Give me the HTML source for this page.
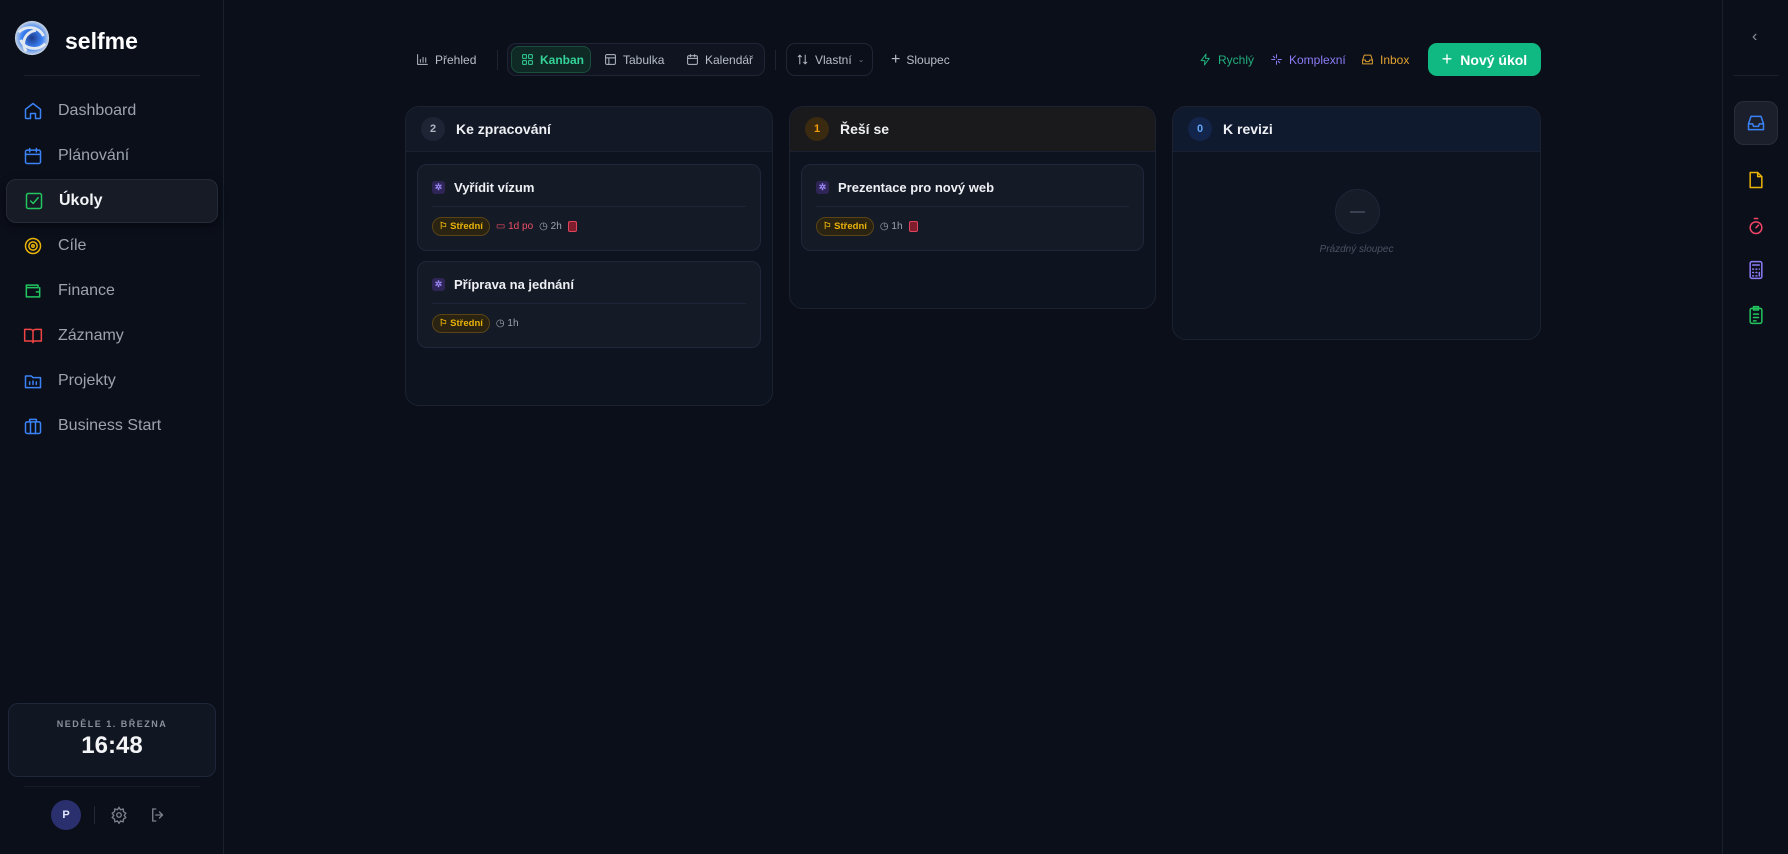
<!DOCTYPE html>
<html><head><meta charset="utf-8"><style>
*{box-sizing:border-box;margin:0;padding:0}
body{width:1788px;height:854px;background:#0b0f1a;font-family:"Liberation Sans",sans-serif;color:#e5e7eb;position:relative;overflow:hidden}
.abs{position:absolute}
.side{left:0;top:0;width:224px;height:854px;border-right:1px solid #1a202c;background:#0b0f1a}
.nav{position:absolute;left:6px;width:212px;height:44px;display:flex;align-items:center;padding-left:17px;font-size:16px;color:#9ca3af}
.nav svg{width:20px;height:20px;margin-right:15px;fill:none;stroke-width:1.8;stroke-linecap:round;stroke-linejoin:round}
.nav.act{background:#161b26;border:1px solid #252b38;border-radius:10px;color:#f3f4f6;font-weight:bold;box-shadow:0 2px 8px rgba(0,0,0,.5)}
.tb{position:absolute;top:43px;height:33px;display:flex;align-items:center;font-size:12px;color:#b8bec9}
.tb svg{width:13px;height:13px;fill:none;stroke:currentColor;stroke-width:1.8;margin-right:6px;stroke-linecap:round;stroke-linejoin:round}
.col{position:absolute;top:106px;background:#0e1320;border:1px solid #1c2230;border-radius:14px;overflow:hidden}
.ch{height:45px;display:flex;align-items:center;padding-left:15px;font-weight:bold;font-size:14px;color:#eef0f4;border-bottom:1px solid #1a2030}
.bd{width:24px;height:24px;border-radius:12px;display:inline-flex;align-items:center;justify-content:center;font-size:11px;margin-right:11px}
.card{position:absolute;left:11px;right:11px;height:87px;background:#141a26;border:1px solid #20273a;border-radius:10px}
.ct{position:absolute;left:14px;top:15px;font-size:13px;font-weight:bold;color:#eef0f4;display:flex;align-items:center}
.ic{width:13px;height:13px;background:#2e2456;border-radius:3px;margin-right:9px;color:#9b87f5;font-size:9px;text-align:center;line-height:13px}
.dv{position:absolute;left:14px;right:14px;top:41px;height:1px;background:#1e2536}
.meta{position:absolute;left:14px;top:52px;display:flex;align-items:center;font-size:10px;color:#9ca3af;gap:6px}
.pill{border:1px solid #5a4416;background:#2a2312;color:#eab308;border-radius:10px;padding:3px 6px;font-weight:bold;font-size:9.5px}
.red{width:9px;height:11px;background:#7f1d2d;border:1px solid #e0455e;border-radius:2px}
.rp svg{position:absolute;width:20px;height:20px;fill:none;stroke-width:1.8;stroke-linecap:round;stroke-linejoin:round}
</style></head><body>
<div class="abs side">
 <svg class="abs" style="left:13px;top:18px" width="38" height="40" viewBox="0 0 40 40"><defs><radialGradient id="g" cx="50%" cy="50%" r="50%"><stop offset="0" stop-color="#1e3a8a"/><stop offset=".6" stop-color="#3b82f6"/><stop offset="1" stop-color="#cbd5e1"/></radialGradient></defs><circle cx="20" cy="20" r="18" fill="url(#g)"/><path d="M6 14c8-8 22-6 26 4M34 26c-8 8-22 6-26-4M14 34c-6-8-2-20 10-22" stroke="#e2e8f0" stroke-width="3" fill="none"/></svg>
 <div class="abs" style="left:65px;top:28px;font-size:23px;font-weight:bold;color:#fff">selfme</div>
 <div class="abs" style="left:24px;top:75px;width:176px;height:1px;background:#1a202c"></div>
 <div class="nav" style="top:89px"><svg stroke="#3b82f6" viewBox="0 0 24 24"><path d="M3 10l9-7 9 7v10a1 1 0 01-1 1h-5v-6h-6v6H4a1 1 0 01-1-1z"/></svg>Dashboard</div>
 <div class="nav" style="top:134px"><svg stroke="#3b82f6" viewBox="0 0 24 24"><rect x="3" y="5" width="18" height="16" rx="2"/><path d="M3 10h18M8 3v4M16 3v4"/></svg>Plánování</div>
 <div class="nav act" style="top:179px"><svg stroke="#22c55e" viewBox="0 0 24 24"><rect x="3" y="3" width="18" height="18" rx="2"/><path d="M8 12l3 3 6-7"/></svg>Úkoly</div>
 <div class="nav" style="top:224px"><svg stroke="#eab308" viewBox="0 0 24 24"><circle cx="12" cy="12" r="9"/><circle cx="12" cy="12" r="5"/><circle cx="12" cy="12" r="1.5"/></svg>Cíle</div>
 <div class="nav" style="top:269px"><svg stroke="#22c55e" viewBox="0 0 24 24"><path d="M4 5h14v3H4zM4 5v14h16V8"/><path d="M16 13h4"/></svg>Finance</div>
 <div class="nav" style="top:314px"><svg stroke="#ef4444" viewBox="0 0 24 24"><path d="M2 4h7a3 3 0 013 3v13a2 2 0 00-2-2H2zM22 4h-7a3 3 0 00-3 3v13a2 2 0 012-2h8z"/></svg>Záznamy</div>
 <div class="nav" style="top:359px"><svg stroke="#3b82f6" viewBox="0 0 24 24"><path d="M3 6h7l2 2h9v12H3z"/><path d="M8 13v3M12 12v4M16 13v3"/></svg>Projekty</div>
 <div class="nav" style="top:404px"><svg stroke="#3b82f6" viewBox="0 0 24 24"><rect x="3" y="7" width="18" height="14" rx="2"/><path d="M8 7V4h8v3M9 7v14M15 7v14"/></svg>Business Start</div>
 <div class="abs" style="left:8px;top:703px;width:208px;height:74px;background:#111623;border:1px solid #20263a;border-radius:10px;text-align:center">
  <div style="margin-top:15px;font-size:9px;letter-spacing:1.5px;color:#8a909c;font-weight:bold">NEDĚLE 1. BŘEZNA</div>
  <div style="font-size:24px;font-weight:bold;color:#f3f4f6;margin-top:3px">16:48</div>
 </div>
 <div class="abs" style="left:24px;top:786px;width:176px;height:1px;background:#161b28"></div>
 <div class="abs" style="left:51px;top:800px;width:30px;height:30px;border-radius:15px;background:#2a2f6e;color:#e0e7ff;font-size:11px;font-weight:bold;text-align:center;line-height:30px">P</div>
 <div class="abs" style="left:94px;top:806px;width:1px;height:18px;background:#222838"></div>
 <svg class="abs" style="left:110px;top:806px" width="18" height="18" viewBox="0 0 24 24" fill="none" stroke="#7b818e" stroke-width="1.8"><circle cx="12" cy="12" r="3"/><path d="M12 2l2 3 3.5-1 .5 3.5 3 2-2 3 2 3-3 2-.5 3.5-3.5-1-2 3-2-3-3.5 1-.5-3.5-3-2 2-3-2-3 3-2 .5-3.5 3.5 1z"/></svg>
 <svg class="abs" style="left:149px;top:806px" width="18" height="18" viewBox="0 0 24 24" fill="none" stroke="#7b818e" stroke-width="1.8" stroke-linecap="round"><path d="M9 4H5v16h4M14 8l4 4-4 4M18 12H9"/></svg>
</div>

<div class="tb" style="left:416px"><svg viewBox="0 0 24 24"><path d="M3 3v18h18M8 17v-5M13 17V8M18 17v-8"/></svg>Přehled</div>
<div class="abs" style="left:497px;top:50px;width:1px;height:20px;background:#1e2432"></div>
<div class="abs" style="left:507px;top:43px;width:258px;height:33px;border:1px solid #1f2534;border-radius:9px;background:#0f1420"></div>
<div class="abs" style="left:511px;top:46px;width:80px;height:27px;border-radius:8px;background:#0f2a24;border:1px solid #1b4d3d"></div>
<div class="tb" style="left:521px;color:#34d399;font-weight:bold"><svg viewBox="0 0 24 24"><rect x="3" y="3" width="7" height="7" rx="1"/><rect x="14" y="3" width="7" height="7" rx="1"/><rect x="3" y="14" width="7" height="7" rx="1"/><rect x="14" y="14" width="7" height="7" rx="1"/></svg>Kanban</div>
<div class="tb" style="left:604px"><svg viewBox="0 0 24 24"><rect x="3" y="3" width="18" height="18" rx="2"/><path d="M3 9h18M9 9v12"/></svg>Tabulka</div>
<div class="tb" style="left:686px"><svg viewBox="0 0 24 24"><rect x="3" y="5" width="18" height="16" rx="2"/><path d="M3 10h18M8 3v4M16 3v4"/></svg>Kalendář</div>
<div class="abs" style="left:775px;top:50px;width:1px;height:20px;background:#1e2432"></div>
<div class="abs" style="left:786px;top:43px;width:87px;height:33px;border:1px solid #1f2534;border-radius:9px"></div>
<div class="tb" style="left:796px"><svg viewBox="0 0 24 24"><path d="M7 20V4M4 7l3-3 3 3M17 4v16M14 17l3 3 3-3"/></svg>Vlastní <span style="margin-left:6px;font-size:8px;color:#6b7280">⌄</span></div>
<div class="tb" style="left:891px"><span style="font-size:16px;margin-right:6px;font-weight:normal">+</span>Sloupec</div>
<div class="tb" style="left:1199px;color:#22b07d"><svg viewBox="0 0 24 24"><path d="M13 2L4 14h7l-1 8 9-12h-7z"/></svg>Rychlý</div>
<div class="tb" style="left:1270px;color:#8b7cf6"><svg viewBox="0 0 24 24"><path d="M12 3v6M12 15v6M3 12h6M15 12h6M6 6l3 3M15 15l3 3"/></svg>Komplexní</div>
<div class="tb" style="left:1361px;color:#e0a030"><svg viewBox="0 0 24 24"><path d="M3 13l3-9h12l3 9v7H3z"/><path d="M3 13h5l1 3h6l1-3h5"/></svg>Inbox</div>
<div class="abs" style="left:1428px;top:43px;width:113px;height:33px;border-radius:9px;background:#10b981;color:#fff;font-weight:bold;font-size:14px;display:flex;align-items:center;justify-content:center"><span style="font-size:18px;margin-right:8px;font-weight:normal">+</span>Nový úkol</div>

<div class="col" style="left:405px;width:368px;height:300px">
 <div class="ch" style="background:#121826"><span class="bd" style="background:#1e2433;color:#b0b6c2">2</span>Ke zpracování</div>
 <div class="card" style="top:57px"><div class="ct"><span class="ic">✲</span>Vyřídit vízum</div><div class="dv"></div>
  <div class="meta"><span class="pill">⚐ Střední</span><span style="color:#ef4f66">▭ 1d po</span><span>◷ 2h</span><span class="red"></span></div></div>
 <div class="card" style="top:154px"><div class="ct"><span class="ic">✲</span>Příprava na jednání</div><div class="dv"></div>
  <div class="meta"><span class="pill">⚐ Střední</span><span>◷ 1h</span></div></div>
</div>
<div class="col" style="left:789px;width:367px;height:203px">
 <div class="ch" style="background:#1a1a1c"><span class="bd" style="background:#3a2a10;color:#f59e0b">1</span>Řeší se</div>
 <div class="card" style="top:57px"><div class="ct"><span class="ic">✲</span>Prezentace pro nový web</div><div class="dv"></div>
  <div class="meta"><span class="pill">⚐ Střední</span><span>◷ 1h</span><span class="red"></span></div></div>
</div>
<div class="col" style="left:1172px;width:369px;height:234px">
 <div class="ch" style="background:#101a2e"><span class="bd" style="background:#13254a;color:#60a5fa">0</span>K revizi</div>
 <div class="abs" style="left:162px;top:82px;width:45px;height:45px;border-radius:23px;background:#161c28;border:1px solid #1e2535"><div style="margin:21px auto 0;width:15px;height:2px;background:#3a4150"></div></div>
 <div class="abs" style="left:0;right:0;top:137px;text-align:center;font-size:10px;font-style:italic;color:#4b5262">Prázdný sloupec</div>
</div>

<div class="abs rp" style="left:1722px;top:0;width:66px;height:854px;border-left:1px solid #1a202c">
 <div class="abs" style="left:29px;top:28px;color:#8b919d;font-size:16px">‹</div>
 <div class="abs" style="left:10px;top:75px;width:46px;height:1px;background:#1a202c"></div>
 <div class="abs" style="left:11px;top:101px;width:44px;height:44px;border-radius:10px;background:#1a1f2b;border:1px solid #272d3a"></div>
 <svg style="left:23px;top:113px" stroke="#3b82f6" viewBox="0 0 24 24"><path d="M3 13l3-9h12l3 9v7H3z"/><path d="M3 13h5l1 3h6l1-3h5"/></svg>
 <svg style="left:23px;top:170px" stroke="#eab308" viewBox="0 0 24 24"><path d="M5 3h9l5 5v13H5z"/><path d="M14 3v5h5"/></svg>
 <svg style="left:23px;top:216px" stroke="#ef4466" viewBox="0 0 24 24"><circle cx="12" cy="14" r="7"/><path d="M10 3h4M12 14l3-3"/></svg>
 <svg style="left:23px;top:260px" stroke="#8b7cf6" viewBox="0 0 24 24"><rect x="5" y="2" width="14" height="20" rx="2"/><path d="M8 6h8M8 11h1M12 11h1M16 11h0M8 15h1M12 15h1M8 19h1M12 19h1M16 15v4"/></svg>
 <svg style="left:23px;top:305px" stroke="#22c55e" viewBox="0 0 24 24"><rect x="5" y="4" width="14" height="18" rx="2"/><path d="M9 2h6v4H9zM9 11h6M9 15h6M9 19h3"/></svg>
</div>
</body></html>
